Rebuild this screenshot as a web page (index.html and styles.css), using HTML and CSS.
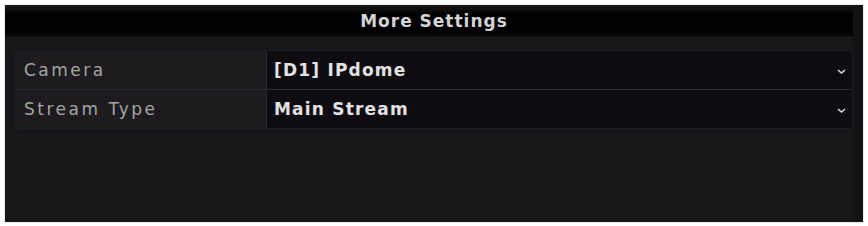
FILE: index.html
```html
<!DOCTYPE html>
<html lang="en">
<head>
    <meta charset="UTF-8">
    <title>More Settings</title>
    <link rel="stylesheet" href="styles.css">
</head>
<body>
    <!-- Dialog -->
    <div class="dialog">
        <div class="dialog-title">More Settings</div>
        <div class="dialog-body">
            <div class="settings-table">
                <div class="row">
                    <div class="label">Camera</div>
                    <div class="value">
                        <span>[D1] IPdome</span>
                        <svg class="chevron" width="9" height="5" viewBox="0 0 9 5"><path d="M1 1 L4.5 4 L8 1" fill="none" stroke="#d8d8d8" stroke-width="1.6"/></svg>
                    </div>
                </div>
                <div class="row">
                    <div class="label">Stream Type</div>
                    <div class="value">
                        <span>Main Stream</span>
                        <svg class="chevron" width="9" height="5" viewBox="0 0 9 5"><path d="M1 1 L4.5 4 L8 1" fill="none" stroke="#d8d8d8" stroke-width="1.6"/></svg>
                    </div>
                </div>
            </div>
        </div>
    </div>
</body>
</html>
```

FILE: styles.css
```css
body {
    margin: 0;
    padding: 5px 5px 4px 5px;
    background-color: #ffffff;
    font-family: "DejaVu Sans", Verdana, sans-serif;
}
.dialog {
    height: 217px;
    background-color: #19161a;
    border-right: 10px solid #141215;
    display: flex;
    flex-direction: column;
    box-shadow: 0 0 1px #888;
}
.dialog-title {
    height: 32px;
    background: linear-gradient(#1a1a1a, #000 30%, #000 80%, #0a0a0a);
    color: #d4d4d4;
    font-size: 17px;
    font-weight: bold;
    letter-spacing: 1px;
    display: flex;
    align-items: center;
    justify-content: center;
    padding-left: 10px;
}
.dialog-body {
    flex: 1;
    padding: 12px 0 0 9px;
    border-top: 1px solid #222024;
}
.settings-table {
    border-radius: 4px;
    overflow: hidden;
    border: 1px solid #1f1d21;
}
.row {
    display: flex;
    height: 38px;
}
.row + .row {
    border-top: 1px solid #2c2a2e;
}
.label {
    width: 242px;
    padding-left: 9px;
    background-color: #1d1b1e;
    color: #a4a4a4;
    font-size: 17px;
    letter-spacing: 2.5px;
    display: flex;
    align-items: center;
    border-right: 1px solid #2c2a2e;
}
.value {
    flex: 1;
    background-color: #0f0c11;
    color: #e2e2e2;
    font-size: 17px;
    font-weight: bold;
    letter-spacing: 1.2px;
    display: flex;
    align-items: center;
    justify-content: space-between;
    padding: 0 6px 0 7px;
}
.chevron {
    margin-top: 3px;
}
```
